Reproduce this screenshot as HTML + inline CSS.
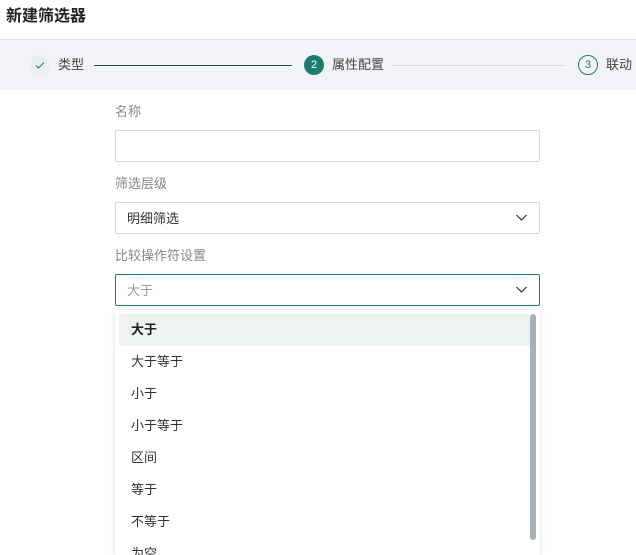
<!DOCTYPE html>
<html><head><meta charset="utf-8"><style>
*{box-sizing:border-box;margin:0;padding:0}
html,body{width:636px;height:555px;overflow:hidden}
body{background:#fff;font-family:"Liberation Sans","Noto Sans CJK SC",sans-serif;color:#333;position:relative}
.abs{position:absolute}
.t{font-size:13px;white-space:nowrap}
.lbl{color:#888;font-size:13px}
.inp{left:115px;width:425px;height:32px;border:1px solid #d5d8dd;border-radius:2px}
.chev{position:absolute;right:11px;top:8px}
.item{position:absolute;left:131px;font-size:13px;color:#333}
</style></head><body>
<div class="abs" style="left:6px;top:2px;font-size:16px;font-weight:bold;color:#222">新建筛选器</div>
<div class="abs" style="left:0;top:39px;width:636px;height:51px;background:#f2f3f6;border-top:1px solid #e2e4e8"></div>
<div class="abs" style="left:30px;top:55px;width:20px;height:20px;border-radius:50%;background:#eaeef0"></div>
<svg class="abs" style="left:34px;top:59px" width="12" height="12" viewBox="0 0 12 12"><path d="M2 6.5l2.5 2.5L10 3.5" fill="none" stroke="#1e7e74" stroke-width="1"/></svg>
<div class="abs t" style="left:58px;top:54px;color:#444">类型</div>
<div class="abs" style="left:94px;top:65px;width:198px;height:1px;background:#2b4a4a"></div>
<div class="abs" style="left:304px;top:55px;width:20px;height:20px;border-radius:50%;background:#1b7c72;color:#fff;font-size:11px;text-align:center;line-height:20px">2</div>
<div class="abs t" style="left:332px;top:54px;color:#444">属性配置</div>
<div class="abs" style="left:392px;top:65px;width:174px;height:1px;background:#d8dadf"></div>
<div class="abs" style="left:578px;top:55px;width:20px;height:20px;border-radius:50%;border:1px solid #1b7c72;color:#1b7c72;font-size:11px;text-align:center;line-height:18px">3</div>
<div class="abs t" style="left:606px;top:54px;color:#444">联动</div>

<div class="abs lbl" style="left:115px;top:101px">名称</div>
<div class="abs inp" style="top:130px"></div>
<div class="abs lbl" style="left:115px;top:173px">筛选层级</div>
<div class="abs inp" style="top:202px"><span class="abs t" style="left:11px;top:5px;color:#333">明细筛选</span>
<svg class="chev" width="13" height="13" viewBox="0 0 13 13"><path d="M1.5 4l5 5 5-5" fill="none" stroke="#333" stroke-width="1.2"/></svg></div>
<div class="abs lbl" style="left:115px;top:245px">比较操作符设置</div>
<div class="abs inp" style="top:274px;border-color:#1b7c72"><span class="abs t" style="left:11px;top:5px;color:#999">大于</span>
<svg class="chev" width="13" height="13" viewBox="0 0 13 13"><path d="M1.5 4l5 5 5-5" fill="none" stroke="#333" stroke-width="1.2"/></svg></div>

<div class="abs" style="left:115px;top:310px;width:425px;height:245px;background:#fff;border-radius:2px;box-shadow:0 1px 6px rgba(0,0,0,.15)"></div>
<div class="abs" style="left:119px;top:314px;width:411px;height:32px;background:#eef2f2;border-radius:2px"></div>
<div class="abs" style="left:530px;top:314px;width:6px;height:226px;background:#a4b0bc;border-radius:3px"></div>
<div class="item" style="top:319px;font-weight:bold;color:#222">大于</div>
<div class="item" style="top:351px">大于等于</div>
<div class="item" style="top:383px">小于</div>
<div class="item" style="top:415px">小于等于</div>
<div class="item" style="top:447px">区间</div>
<div class="item" style="top:479px">等于</div>
<div class="item" style="top:511px">不等于</div>
<div class="item" style="top:543px">为空</div>
</body></html>
